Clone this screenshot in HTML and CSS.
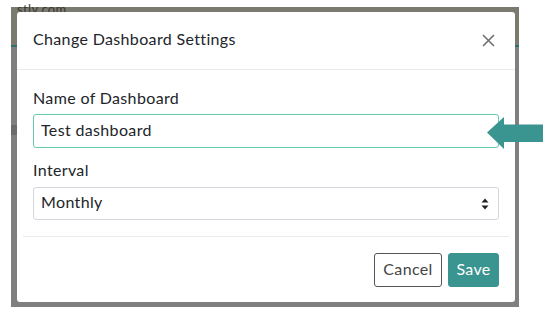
FILE: index.html
```html
<!DOCTYPE html>
<html lang="en">
<head>
	<meta charset="UTF-8">
	<title>Change Dashboard Settings</title>
	<link rel="stylesheet" href="styles.css">
</head>
<body>
	<div class="backdrop">
		<span class="bg-text">stly.com</span>
		<span class="bg-line"></span>
		<div class="modal">
			<div class="modal-header">
				<h5 class="modal-title">Change Dashboard Settings</h5>
				<svg class="close" width="13" height="13" viewBox="0 0 13 13">
					<path d="M1 1L12 12M12 1L1 12" stroke="#6f6f6f" stroke-width="1.6" fill="none"/>
				</svg>
			</div>
			<div class="modal-body">
				<div class="form-group">
					<label class="label">Name of Dashboard</label>
					<input class="input" type="text" value="Test dashboard">
				</div>
				<div class="form-group last">
					<label class="label">Interval</label>
					<div class="select">
						<span>Monthly</span>
						<svg width="8" height="12" viewBox="0 0 8 12">
							<path d="M4 0.5L7.5 4.5H0.5Z M4 11.5L7.5 7.5H0.5Z" fill="#222"/>
						</svg>
					</div>
				</div>
			</div>
			<div class="modal-footer">
				<button class="btn btn-cancel">Cancel</button>
				<button class="btn btn-save">Save</button>
			</div>
		</div>
	</div>
	<svg class="arrow" width="56" height="33" viewBox="0 0 56 33">
		<polygon points="0,15.5 17,0 17,7.5 56,7.5 56,25 17,25 17,32 " fill="#3a9490"/>
	</svg>
</body>
</html>
```

FILE: styles.css
```css
*{
	margin:0;
	padding:0;
	box-sizing:border-box;
}
html,body{
	width:100%;
	height:100%;
}
body{
	background:#fff;
	font-family:Lato,"Open Sans",sans-serif;
	color:#212529;
	letter-spacing:0.35px;
	overflow:hidden;
	padding:7px 0 0 11px;
	position:relative;
}
.backdrop{
	width:508px;
	height:300px;
	padding:5px 4px 5px 6px;
	background:linear-gradient(to bottom,#7b7a6f 0,#7b7a6f 38px,#2f6e6a 38px,#2f6e6a 40px,#7f7f7f 40px);
	position:relative;
}
.bg-text{
	position:absolute;
	left:6px;
	top:-6px;
	font-size:13px;
	color:#3a3a33;
}
.bg-line{
	position:absolute;
	left:0;
	top:118px;
	width:6px;
	height:10px;
	background:#6b6b6b;
}
.modal{
	position:relative;
	background:#fff;
	border-radius:3px;
	height:290px;
}
.modal-header{
	display:flex;
	justify-content:space-between;
	align-items:center;
	padding:16px 20px 17px 16px;
	border-bottom:1px solid #e9ecef;
}
.modal-title{
	font-size:16px;
	font-weight:400;
	line-height:24px;
	position:relative;
	top:-1px;
}
.close{
	display:block;
}
.modal-body{
	padding:16px;
	height:166px;
}
.form-group{
	margin-bottom:10px;
}
.form-group.last{
	margin-bottom:0;
}
.label{
	display:block;
	font-size:16px;
	line-height:23px;
	margin-bottom:5px;
}
.form-group.last .label{
	margin-bottom:6px;
}
.input{
	display:block;
	width:100%;
	height:34px;
	border:1px solid #66cba8;
	border-radius:3px;
	padding:0 7px 3px;
	font-family:inherit;
	font-size:16px;
	letter-spacing:inherit;
	color:#212529;
	outline:none;
}
.select{
	display:flex;
	justify-content:space-between;
	align-items:center;
	height:33px;
	border:1px solid #d6d6de;
	border-radius:3px;
	padding:0 9px 0 7px;
	font-size:16px;
}
.select span{
	position:relative;
	top:-2px;
}
.modal-footer{
	display:flex;
	justify-content:flex-end;
	gap:6px;
	margin:0 6px;
	padding:16px 10px 15px;
	border-top:1px solid #e9ecef;
}
.btn{
	height:34px;
	border-radius:3px;
	font-family:inherit;
	font-size:16px;
	letter-spacing:inherit;
	padding-bottom:3px;
	cursor:pointer;
}
.btn-cancel{
	width:68px;
	background:#fff;
	border:1px solid #555;
	color:#444;
}
.btn-save{
	width:51px;
	background:#3a9490;
	border:1px solid #3a9490;
	color:#fff;
}
.arrow{
	position:absolute;
	left:487px;
	top:117px;
}
```
